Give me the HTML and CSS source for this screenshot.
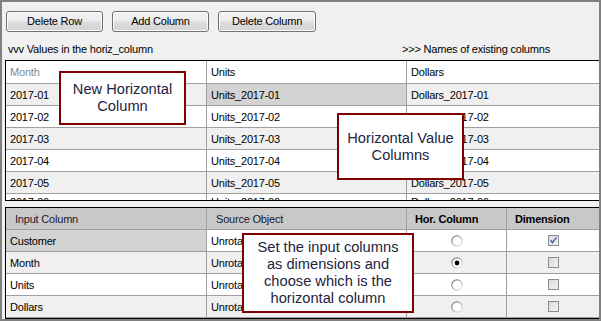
FILE: index.html
```html
<!DOCTYPE html>
<html>
<head>
<meta charset="utf-8">
<link rel="stylesheet" href="styles.css">
</head>
<body>
<div class="frame">
  <div class="toolbar">
    <button class="btn">Delete Row</button>
    <button class="btn">Add Column</button>
    <button class="btn wide">Delete Column</button>
  </div>
  <div class="labels">
    <span class="lab-left">vvv Values in the horiz_column</span>
    <span class="lab-right">&gt;&gt;&gt; Names of existing columns</span>
  </div>

  <div class="grid grid-top">
    <div class="row hdr">
      <div class="cell muted">Month</div>
      <div class="cell">Units</div>
      <div class="cell last">Dollars</div>
    </div>
    <div class="row alt">
      <div class="cell">2017-01</div>
      <div class="cell sel">Units_2017-01</div>
      <div class="cell last">Dollars_2017-01</div>
    </div>
    <div class="row">
      <div class="cell">2017-02</div>
      <div class="cell">Units_2017-02</div>
      <div class="cell last">Dollars_2017-02</div>
    </div>
    <div class="row alt">
      <div class="cell">2017-03</div>
      <div class="cell">Units_2017-03</div>
      <div class="cell last">Dollars_2017-03</div>
    </div>
    <div class="row">
      <div class="cell">2017-04</div>
      <div class="cell">Units_2017-04</div>
      <div class="cell last">Dollars_2017-04</div>
    </div>
    <div class="row alt">
      <div class="cell">2017-05</div>
      <div class="cell">Units_2017-05</div>
      <div class="cell last">Dollars_2017-05</div>
    </div>
    <div class="row partial">
      <div class="cell">2017-06</div>
      <div class="cell">Units_2017-06</div>
      <div class="cell last">Dollars_2017-06</div>
    </div>
  </div>

  <div class="grid grid-bottom">
    <div class="row hdr2">
      <div class="cell hcell">Input Column</div>
      <div class="cell hcell">Source Object</div>
      <div class="cell hcell bold">Hor. Column</div>
      <div class="cell hcell bold last">Dimension</div>
    </div>
    <div class="row">
      <div class="cell sel">Customer</div>
      <div class="cell">Unrotated</div>
      <div class="cell center">
        <svg class="radio" width="12" height="12" viewBox="0 0 12 12"><defs><linearGradient id="r1" x1="0" y1="0" x2="1" y2="1"><stop offset="0" stop-color="#6a6a6a"/><stop offset="1" stop-color="#f4f4f4"/></linearGradient></defs><circle cx="6" cy="6" r="5.2" fill="#fff" stroke="url(#r1)" stroke-width="1.2"/></svg>
      </div>
      <div class="cell center last">
        <svg class="check" width="11" height="11" viewBox="0 0 11 11"><defs><linearGradient id="c1" x1="0" y1="0" x2="1" y2="1"><stop offset="0" stop-color="#d8d8d8"/><stop offset="1" stop-color="#f6f6f6"/></linearGradient></defs><rect x="0.5" y="0.5" width="10" height="10" fill="url(#c1)" stroke="#8c8c8c"/><path d="M2.5 5.2 L4.5 7.5 L8.6 2.4" fill="none" stroke="#4a64a8" stroke-width="1.5"/></svg>
      </div>
    </div>
    <div class="row alt">
      <div class="cell">Month</div>
      <div class="cell">Unrotated</div>
      <div class="cell center">
        <svg class="radio" width="12" height="12" viewBox="0 0 12 12"><defs><linearGradient id="r2" x1="0" y1="0" x2="1" y2="1"><stop offset="0" stop-color="#6a6a6a"/><stop offset="1" stop-color="#f4f4f4"/></linearGradient></defs><circle cx="6" cy="6" r="5.2" fill="#fff" stroke="url(#r2)" stroke-width="1.2"/><circle cx="6" cy="6" r="2.4" fill="#000"/></svg>
      </div>
      <div class="cell center last">
        <svg class="check" width="11" height="11" viewBox="0 0 11 11"><defs><linearGradient id="c2" x1="0" y1="0" x2="1" y2="1"><stop offset="0" stop-color="#d8d8d8"/><stop offset="1" stop-color="#f6f6f6"/></linearGradient></defs><rect x="0.5" y="0.5" width="10" height="10" fill="url(#c2)" stroke="#8c8c8c"/></svg>
      </div>
    </div>
    <div class="row">
      <div class="cell">Units</div>
      <div class="cell">Unrotated</div>
      <div class="cell center">
        <svg class="radio" width="12" height="12" viewBox="0 0 12 12"><defs><linearGradient id="r3" x1="0" y1="0" x2="1" y2="1"><stop offset="0" stop-color="#6a6a6a"/><stop offset="1" stop-color="#f4f4f4"/></linearGradient></defs><circle cx="6" cy="6" r="5.2" fill="#fff" stroke="url(#r3)" stroke-width="1.2"/></svg>
      </div>
      <div class="cell center last">
        <svg class="check" width="11" height="11" viewBox="0 0 11 11"><defs><linearGradient id="c3" x1="0" y1="0" x2="1" y2="1"><stop offset="0" stop-color="#d8d8d8"/><stop offset="1" stop-color="#f6f6f6"/></linearGradient></defs><rect x="0.5" y="0.5" width="10" height="10" fill="url(#c3)" stroke="#8c8c8c"/></svg>
      </div>
    </div>
    <div class="row alt">
      <div class="cell">Dollars</div>
      <div class="cell">Unrotated</div>
      <div class="cell center">
        <svg class="radio" width="12" height="12" viewBox="0 0 12 12"><defs><linearGradient id="r4" x1="0" y1="0" x2="1" y2="1"><stop offset="0" stop-color="#6a6a6a"/><stop offset="1" stop-color="#f4f4f4"/></linearGradient></defs><circle cx="6" cy="6" r="5.2" fill="#fff" stroke="url(#r4)" stroke-width="1.2"/></svg>
      </div>
      <div class="cell center last">
        <svg class="check" width="11" height="11" viewBox="0 0 11 11"><defs><linearGradient id="c4" x1="0" y1="0" x2="1" y2="1"><stop offset="0" stop-color="#d8d8d8"/><stop offset="1" stop-color="#f6f6f6"/></linearGradient></defs><rect x="0.5" y="0.5" width="10" height="10" fill="url(#c4)" stroke="#8c8c8c"/></svg>
      </div>
    </div>
  </div>

  <div class="callout c1">New Horizontal<br>Column</div>
  <div class="callout c2">Horizontal Value<br>Columns</div>
  <div class="callout c3">Set the input columns<br>as dimensions and<br>choose which is the<br>horizontal column</div>
</div>
</body>
</html>
```
FILE: styles.css
```css
html, body {
  margin: 0;
  padding: 0;
  background: #ffffff;
}

.frame {
  position: relative;
  width: 601px;
  height: 321px;
  box-sizing: border-box;
  border: 2px solid #808080;
  background: #f0f0f0;
  overflow: hidden;
  font-family: "Liberation Sans", Arial, sans-serif;
  font-size: 11px;
  letter-spacing: -0.2px;
  color: #000;
}

.toolbar {
  display: flex;
  gap: 9px;
  padding: 9px 0 0 4px;
}

.btn {
  width: 97px;
  height: 21px;
  padding: 0;
  margin: 0;
  box-sizing: border-box;
  border: 1px solid #707070;
  border-radius: 3px;
  background: linear-gradient(#f3f3f3 0%, #ececec 48%, #dedede 52%, #d2d2d2 100%);
  box-shadow: inset 0 0 0 1px #fbfbfb;
  font-family: inherit;
  font-size: 11px;
  letter-spacing: -0.2px;
  color: #000;
  line-height: 19px;
}

.btn.wide {
  width: 98px;
}

.labels {
  display: grid;
  grid-template-columns: 400px 1fr;
  height: 13px;
  line-height: 13px;
  margin-top: 11px;
  white-space: nowrap;
}

.lab-left {
  padding-left: 6px;
}

.grid {
  margin-left: 3px;
  background: #fff;
  border-left: 1px solid #000;
  border-top: 1px solid #000;
  border-bottom: 1px solid #000;
  overflow: hidden;
}

.grid-top {
  margin-top: 4px;
  height: 139px;
}

.grid-bottom {
  margin-top: 6px;
  height: 110px;
}

.row {
  display: grid;
  height: 22px;
  background: #fff;
}

.grid-top .row {
  grid-template-columns: 201px 200px 1fr;
}

.grid-bottom .row {
  grid-template-columns: 201px 200px 100px 1fr;
}

.row.hdr {
  height: 23px;
}

.row.alt {
  background: #f0f0f0;
}

.row.partial .cell {
  align-items: flex-start;
  padding-top: 2px;
  line-height: 13px;
}

.cell {
  box-sizing: border-box;
  border-right: 1px solid #a0a0a0;
  border-bottom: 1px solid #a0a0a0;
  padding-left: 4px;
  display: flex;
  align-items: center;
  white-space: nowrap;
  overflow: hidden;
}

.cell.last {
  border-right: none;
}

.cell.muted {
  color: #7f8898;
}

.cell.sel {
  background: #d3d3d3;
}

.row.hdr2 {
  background: #c8c8c8;
}

.cell.hcell {
  padding-left: 9px;
  color: #1a1a2a;
}

.cell.bold {
  font-weight: bold;
  color: #000;
  padding-left: 8px;
}

.cell.center {
  justify-content: center;
  padding-left: 0;
}

.radio, .check {
  display: block;
}

.callout {
  position: absolute;
  box-sizing: border-box;
  border: 2px solid #800000;
  background: #fff;
  color: #1c2541;
  font-size: 14.67px;
  letter-spacing: 0;
  line-height: 17px;
  text-align: center;
  display: flex;
  align-items: center;
  justify-content: center;
}

.c1 {
  left: 57px;
  top: 69px;
  width: 127px;
  height: 54px;
}

.c2 {
  left: 335px;
  top: 111px;
  width: 127px;
  height: 67px;
}

.c3 {
  left: 240px;
  top: 231px;
  width: 172px;
  height: 80px;
}
```
